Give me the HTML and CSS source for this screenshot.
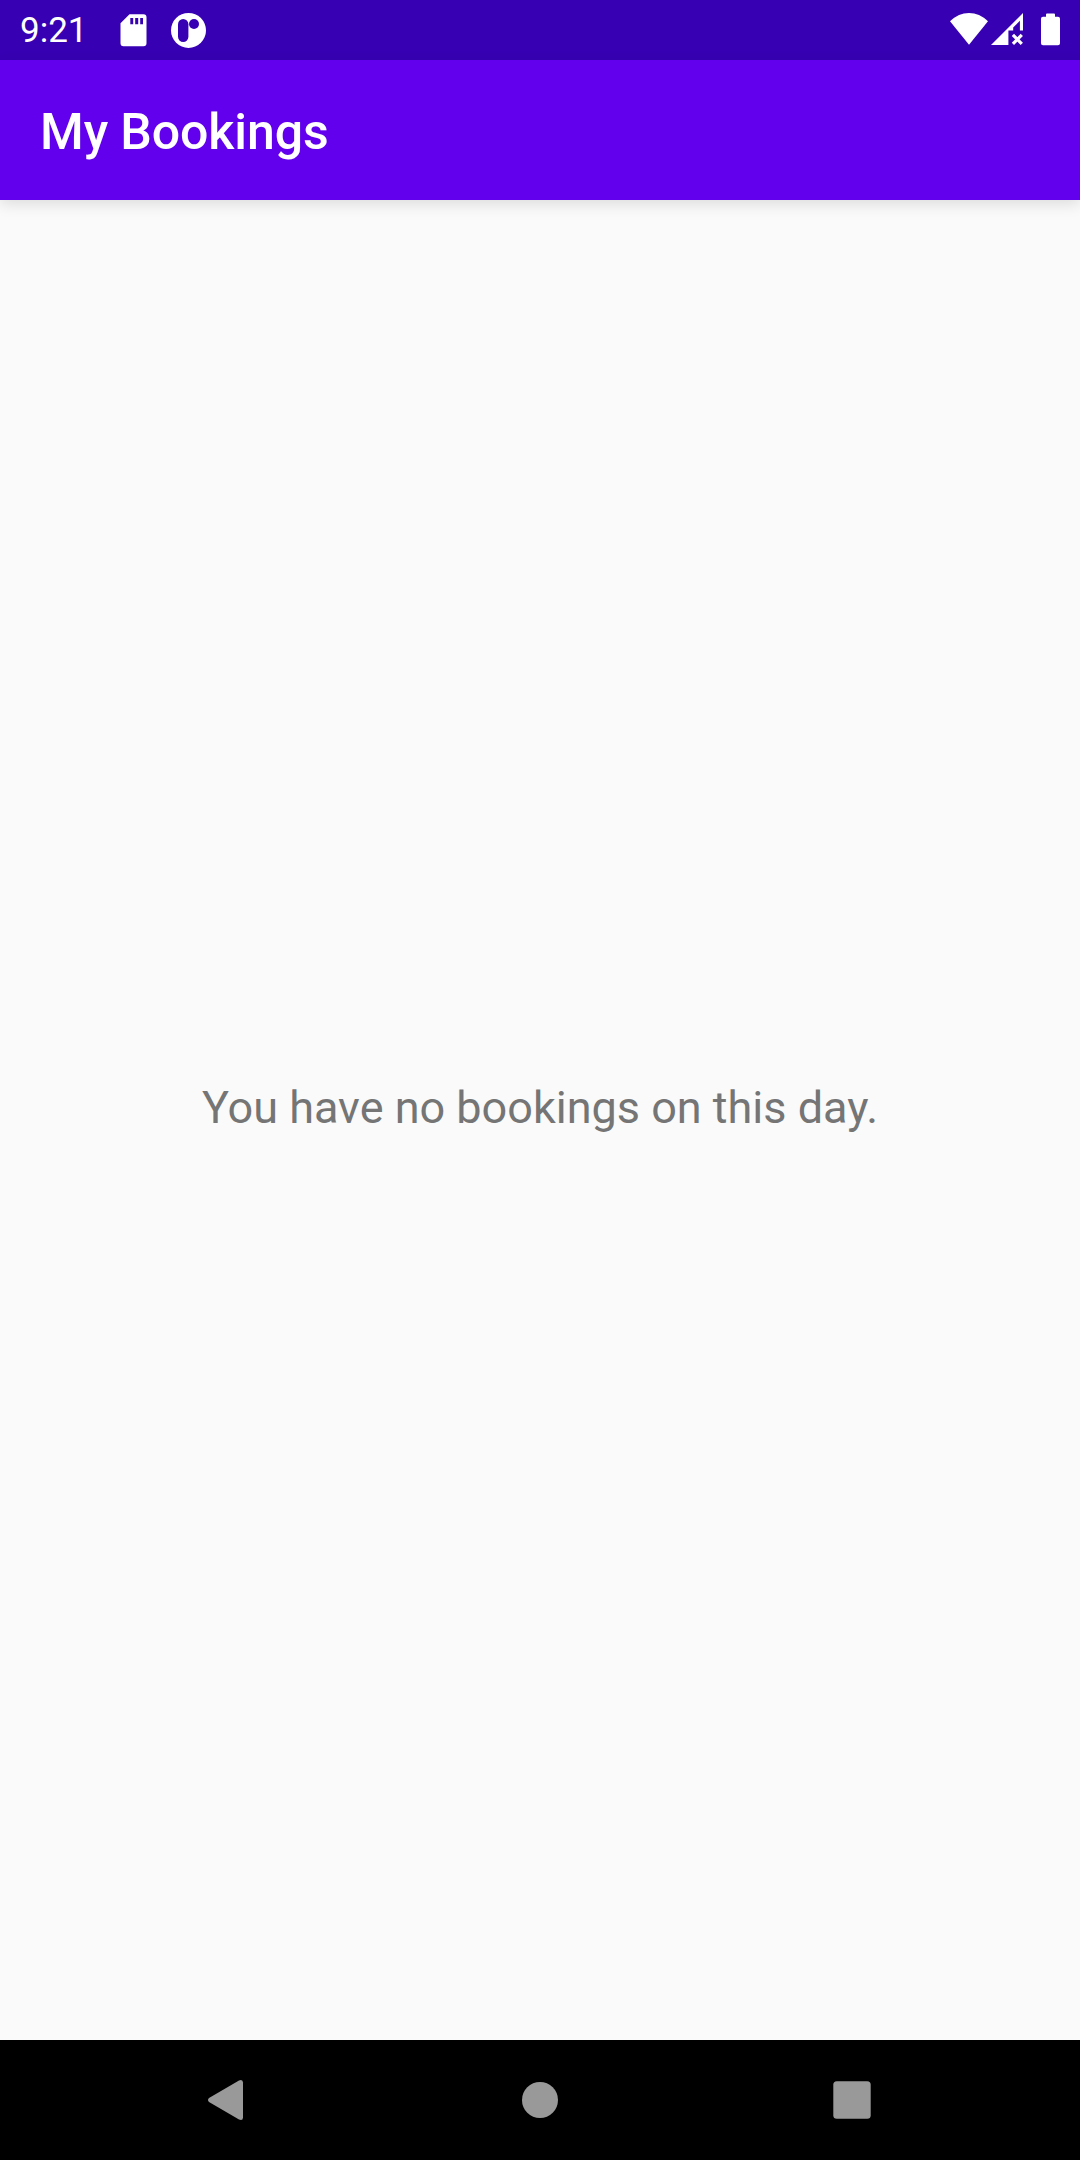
FILE: index.html
```html
<!DOCTYPE html>
<html lang="en">
<head>
<meta charset="utf-8">
<title>My Bookings</title>
<link rel="stylesheet" href="styles.css">
</head>
<body>
<div class="screen">
  <div class="status-bar">
    <div class="status-left">
      <span class="clock">9:21</span>
      <svg class="icon" width="28" height="60" viewBox="120 0 28 60"><path fill-rule="evenodd" d="M129.5 14.3H143.5Q146.5 14.3 146.5 17.3V43.3Q146.5 46.3 143.5 46.3H123.5Q120.5 46.3 120.5 43.3V23.3ZM130.3 18V24.3H133.2V18ZM135.2 18V24.3H138.2V18ZM140.2 18V24.3H143V18Z"/></svg>
      <svg class="icon" width="36" height="60" viewBox="170 0 36 60"><circle cx="188.5" cy="30.4" r="17.5"/><rect class="hole" x="178" y="19" width="10.4" height="23" rx="5.2"/><circle class="hole" cx="194" cy="24" r="5"/></svg>
    </div>
    <div class="status-right">
      <svg class="icon" width="38" height="60" viewBox="950 0 38 60"><path d="M969 44.8L950 21.3Q958.5 13 969 13T988 21.3Z"/></svg>
      <svg class="icon" width="34" height="60" viewBox="990 0 34 60"><path fill-rule="evenodd" d="M991 45L1023 13V30.4H1019.9V20.8L1013.2 27.5V30.4H1008.4V45Z"/><path class="cross" d="M1012.9 34.9L1021.8 43.8M1021.8 34.9L1012.9 43.8"/></svg>
      <svg class="icon battery" width="20" height="60" viewBox="1041 0 20 60"><path d="M1046 16.8V14.5Q1046 13.5 1047 13.5H1054Q1055 13.5 1055 14.5V16.8H1058Q1060 16.8 1060 18.8V43.3Q1060 45.3 1058 45.3H1043Q1041 45.3 1041 43.3V18.8Q1041 16.8 1043 16.8Z"/></svg>
    </div>
  </div>
  <header class="app-bar"><h1 class="title">My Bookings</h1></header>
  <main class="content"><p class="empty">You have no bookings on this day.</p></main>
  <nav class="nav-bar">
    <svg class="nav-icon" width="40" height="44" viewBox="206 2078 40 44"><path d="M239 2080.4Q242.8 2078.8 243 2082.5V2117.5Q242.8 2121.2 239 2119.6L209 2102Q207 2100 209 2098Z"/></svg>
    <svg class="nav-icon" width="40" height="40" viewBox="0 0 40 40"><circle cx="21" cy="20" r="18"/></svg>
    <svg class="nav-icon" width="40" height="40" viewBox="832 2080 40 40"><rect x="833.3" y="2081.3" width="37.4" height="37.4" rx="3.5"/></svg>
  </nav>
</div>
</body>
</html>
```
FILE: styles.css
```css
body {
  margin: 0;
  font-family: Roboto, sans-serif;
}

.screen {
  display: flex;
  flex-direction: column;
  width: 1080px;
  height: 2160px;
  background: #fafafa;
}

.status-bar {
  display: flex;
  justify-content: space-between;
  height: 60px;
  padding: 0 19px 0 20px;
  background: #3700b3;
  color: #fff;
}

.status-left,
.status-right {
  display: flex;
}

.clock {
  width: 100px;
  font-size: 35px;
  line-height: 62px;
}

.icon {
  display: block;
  fill: #fff;
}

.status-left .icon + .icon {
  margin-left: 22px;
}

.status-right .icon + .icon {
  margin-left: 2px;
}

.status-right .icon + .battery {
  margin-left: 17px;
}

.hole {
  fill: #3700b3;
}

.cross {
  fill: none;
  stroke: #fff;
  stroke-width: 3.2;
}

.app-bar {
  display: flex;
  align-items: center;
  height: 136px;
  padding: 4px 40px 0;
  background: #6200ee;
  color: #fff;
  box-shadow: 0 4px 14px rgba(0, 0, 0, 0.12);
}

.title {
  margin: 0;
  font-size: 50px;
  font-weight: 500;
  letter-spacing: -0.1px;
  line-height: 60px;
}

.content {
  display: flex;
  flex: 1;
  align-items: center;
  justify-content: center;
  padding-bottom: 24px;
}

.empty {
  margin: 0;
  color: #757575;
  font-size: 45px;
  line-height: 54px;
}

.nav-bar {
  display: flex;
  align-items: center;
  justify-content: space-between;
  height: 120px;
  padding: 0 208px 0 206px;
  background: #000;
}

.nav-icon {
  display: block;
  fill: #999;
}
```
